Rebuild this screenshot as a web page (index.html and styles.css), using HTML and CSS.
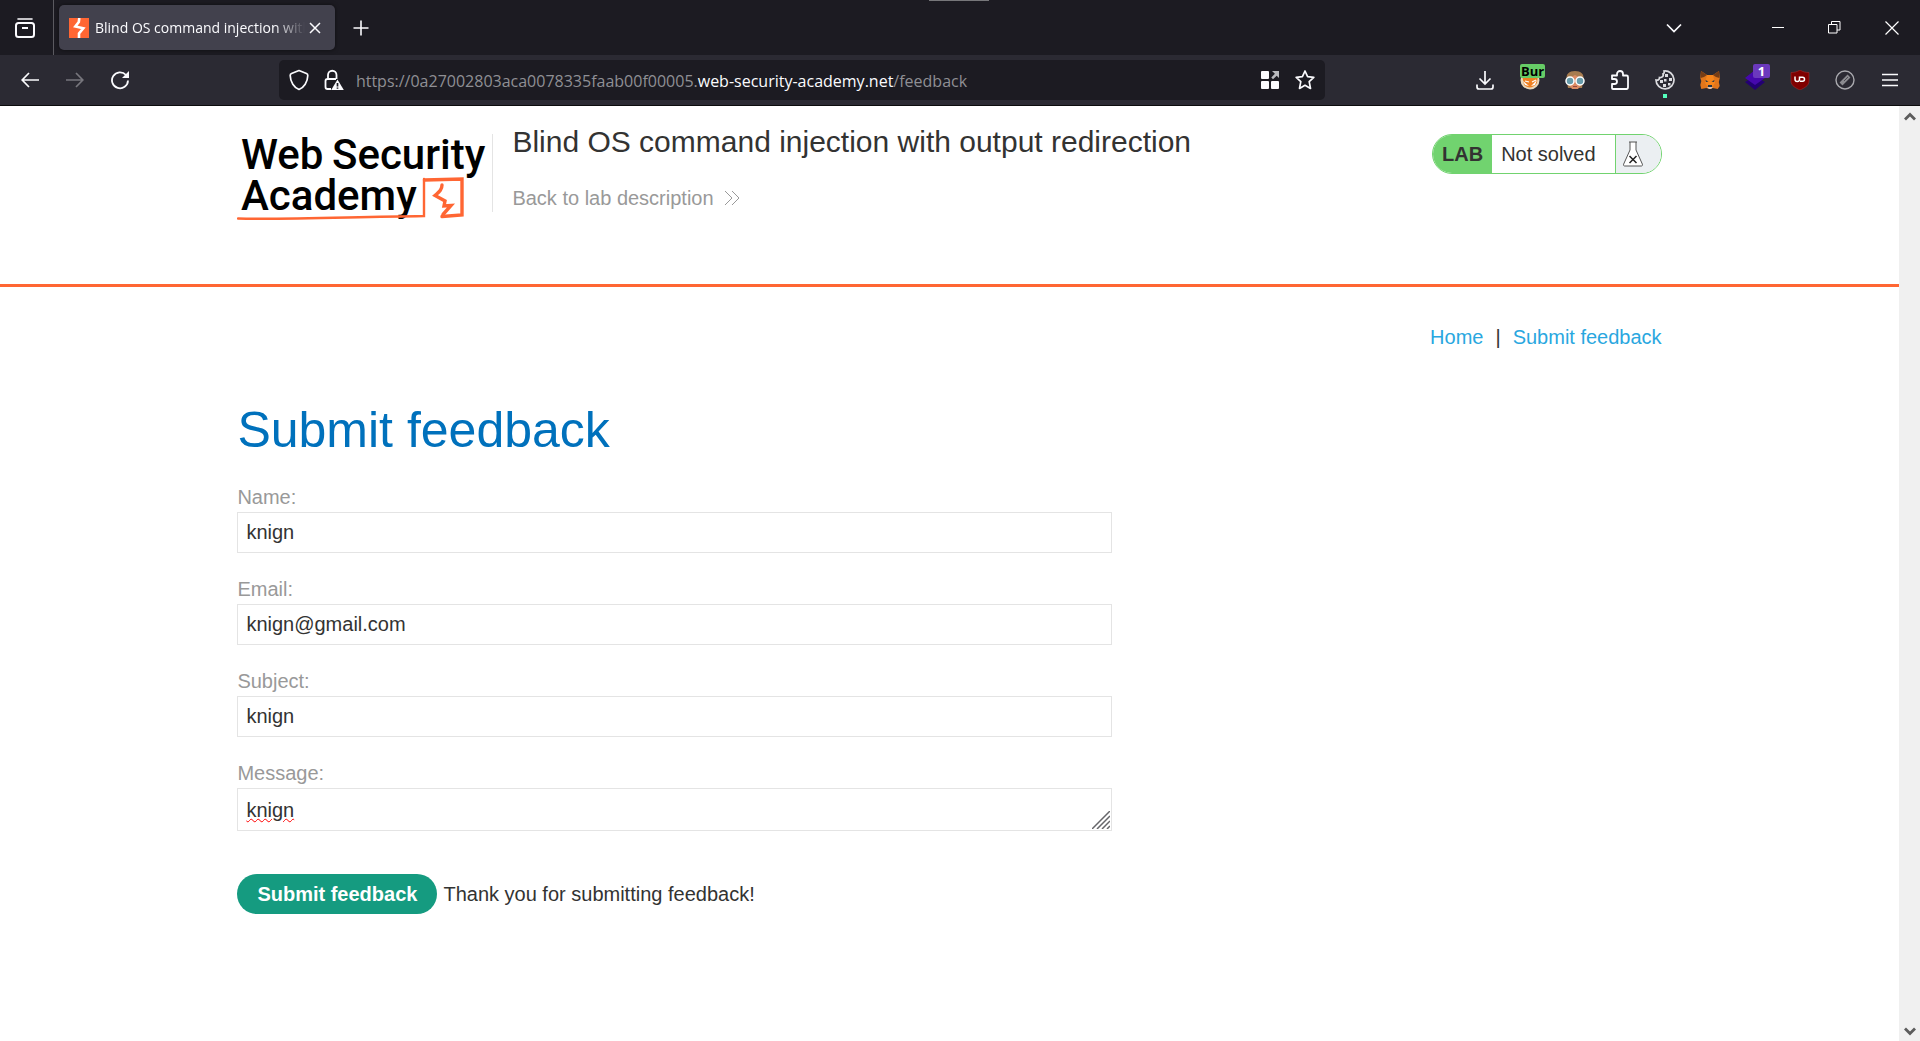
FILE: index.html
```html
<!DOCTYPE html>
<html lang="en">
<head>
<meta charset="utf-8">
<title>Blind OS command injection with output redirection</title>
<link rel="stylesheet" href="styles.css">
</head>
<body>
<div class="browser">
  <div class="tabbar">
    <button class="icon-btn view-btn" aria-label="Firefox View"><svg width="20" height="20" viewBox="0 0 20 20" fill="none" stroke="#fbfbfe" stroke-width="2"><path d="M3 1h14" stroke-width="1.6" stroke-linecap="round"/><rect x="1" y="5" width="18" height="14" rx="2.5"/><path d="M7 10h6"/></svg></button>
    <div class="tab">
      <svg class="favicon" width="20" height="20" viewBox="0 0 20 20"><path fill="#ff6633" d="M0 0h20v20H0z"/><path fill="none" stroke="#fff" stroke-width="2.600" d="M10.300 0L9.800 4 6.300 8.500l8 1.800L10 15.500V20"/></svg>
      <span class="tab-title">Blind OS command injection with output redirection</span>
      <button class="tab-close" aria-label="Close tab"><svg width="12" height="12" viewBox="0 0 12 12" stroke="#fbfbfe" stroke-width="1.500"><path d="M1 1l10 10M11 1L1 11"/></svg></button>
    </div>
    <button class="icon-btn new-tab" aria-label="New tab"><svg width="16" height="16" viewBox="0 0 16 16" stroke="#fbfbfe" stroke-width="1.600"><path d="M8 .5v15M.5 8h15"/></svg></button>
    <span class="notch"></span>
    <div class="window-controls">
      <button class="list-tabs" aria-label="List all tabs"><svg width="16" height="10" viewBox="0 0 16 10" fill="none" stroke="#fbfbfe" stroke-width="1.700"><path d="M1 1.500l7 7 7-7"/></svg></button>
      <button aria-label="Minimize"><svg width="12" height="12" viewBox="0 0 12 12"><path fill="#fff" d="M0 5h12v1H0z"/></svg></button>
      <button aria-label="Restore"><svg width="13" height="13" viewBox="0 0 13 13" fill="none" stroke="#fff"><path d="M.5 3.500h8.500v8.500H.5zM3.500 3.500v-3h8.500v8.500H9"/></svg></button>
      <button aria-label="Close"><svg width="14" height="14" viewBox="0 0 14 14" stroke="#fff" stroke-width="1.200"><path d="M.5 .5l13 13M13.500 .5l-13 13"/></svg></button>
    </div>
  </div>
  <div class="toolbar">
    <button class="icon-btn" aria-label="Back"><svg width="18" height="16" viewBox="0 0 18 16" fill="none" stroke="#fbfbfe" stroke-width="1.700"><path d="M18 8H1.500M8 1L1.200 8 8 15"/></svg></button>
    <button class="icon-btn" aria-label="Forward" disabled><svg width="18" height="16" viewBox="0 0 18 16" fill="none" stroke="#77767d" stroke-width="1.700"><path d="M0 8h16.500M10 1l6.800 7-6.800 7"/></svg></button>
    <button class="icon-btn" aria-label="Reload"><svg width="20" height="20" viewBox="0 0 20 20" fill="none" stroke="#fbfbfe" stroke-width="1.800"><path d="M16 5a8 8 0 1 0 2 5.500"/><path fill="#fbfbfe" stroke="none" d="M19 1v7h-7z"/></svg></button>
    <span class="spring"></span>
    <div class="urlbar">
      <button class="url-icon" aria-label="Tracking protection"><svg width="20" height="22" viewBox="0 0 20 22" fill="none" stroke="#fbfbfe" stroke-width="1.700" stroke-linejoin="round"><path d="M10 1.500l7.500 3c1 .4 1.300 1 1.300 2C18.600 13 15 18.500 10 20.500 5 18.500 1.400 13 1.200 6.500c0-1 .3-1.600 1.300-2z"/></svg></button>
      <button class="url-icon" aria-label="Connection not secure"><svg width="20" height="22" viewBox="0 0 20 22" fill="none"><path stroke="#fbfbfe" stroke-width="1.800" d="M7 20H3.500C2 20 1.500 19.500 1.500 18v-6c0-1.500.5-2 2-2H12M4 10V6a4 4 0 0 1 8.500 0v4"/><path fill="#fbfbfe" d="M13.500 10.500L19.800 21H7.200z"/><path stroke="#1c1b22" stroke-width="1.700" d="M13.500 14v3.500M13.500 18.400v1.400"/></svg></button>
      <span class="url">https://0a27002803aca0078335faab00f00005.<b>web-security-academy.net</b>/feedback</span>
      <button class="url-icon" aria-label="Grid"><svg width="18" height="18" viewBox="0 0 18 18" fill="#fbfbfe"><rect width="8" height="8" rx="1"/><rect y="10" width="8" height="8" rx="1"/><rect x="10" y="10" width="8" height="8" rx="1"/><path fill="#b9b9bd" d="M11 0h7v7l-2.300-2.300-3.700 3.500-1.700-1.700 3.600-3.700z"/></svg></button>
      <button class="url-icon" aria-label="Bookmark this page"><svg width="20" height="20" viewBox="0 0 20 20" fill="none" stroke="#fbfbfe" stroke-width="1.700" stroke-linejoin="round"><path d="M10 1l2.600 5.700 6.200.7-4.600 4.200 1.300 6.800L10 15.300l-5.500 3.100 1.300-6.800L1.200 7.400l6.200-.7z"/></svg></button>
    </div>
    <span class="spring"></span>
    <button class="icon-btn" aria-label="Downloads"><svg width="18" height="20" viewBox="0 0 18 20" fill="none" stroke="#fbfbfe" stroke-width="1.700"><path d="M9 1v13M3.500 8.500L9 14l5.500-5.500M1 14.500V17c0 1.300.7 2 2 2h12c1.300 0 2-.7 2-2v-2.500"/></svg></button>
    <button class="icon-btn" aria-label="FoxyProxy"><svg width="20" height="20" viewBox="0 0 20 20"><circle cx="10" cy="10" r="9.500" fill="#e8d6ba"/><path fill="#ef8122" d="M2 5l7 3 9-3-1 8c-3 5-9 6-13 2z"/><path fill="#fff" d="M3 11l6 5-4-1zM17 10l-6 6 4-1z"/><path stroke="#fff" stroke-width="1.200" d="M5 11l4 1M12 12l4-2"/></svg><span class="badge badge-green">Bur</span></button>
    <button class="icon-btn" aria-label="Extension"><svg width="20" height="20" viewBox="0 0 20 20"><path fill="#a77c50" d="M10 1c6 0 9 3 8.500 8L17 18H3L1.500 9C1 4 4 1 10 1z"/><path fill="#db8b64" d="M4 8l6-3 6 3v7l-3 4H7l-3-4z"/><circle cx="5" cy="11" r="4" fill="#679baa" stroke="#fff" stroke-width="1.500"/><circle cx="15" cy="11" r="4" fill="#679baa" stroke="#fff" stroke-width="1.500"/><path stroke="#9a493d" d="M8 16.500h4"/></svg></button>
    <button class="icon-btn" aria-label="Extensions"><svg width="18" height="20" viewBox="0 0 18 20" fill="none" stroke="#fbfbfe" stroke-width="1.800" stroke-linejoin="round"><path d="M1 8V5.500h5V4a3 3 0 0 1 6 0v1.500h3.500c1 0 1.500.5 1.500 1.500v10c0 1.300-.5 2-1.500 2H2c-.7 0-1-.3-1-1v-4h2.500a2.500 2.500 0 0 0 0-5H1z"/></svg></button>
    <button class="icon-btn cookie" aria-label="Cookie editor"><svg width="20" height="20" viewBox="0 0 20 20" fill="none" stroke="#dcdce0" stroke-width="1.700"><path d="M9 1a9 9 0 1 1-8 9c2 .5 3.500-.5 3.500-2.500C7 8 9 6 8 4c1-.5 1.500-1.500 1-3z"/><path stroke="none" fill="#dcdce0" d="M10 4h3v3h-3zM14 8h3v3h-3zM9 9h2.500v2.500H9zM5 10h3v3H5zM8 14h3v3H8zM13 13h2.500v2.500H13z"/></svg></button>
    <button class="icon-btn" aria-label="MetaMask"><svg width="20" height="20" viewBox="0 0 20 20"><path fill="#e2761b" d="M1 1l6 4h6l6-4 .8 7-1 4 .9 4-2 3-5-1-1.700 1h-2L6.300 18l-5 1-1-4 1-4L.3 8z"/><path fill="#763d16" d="M1 1l6 4-3 2-3.500 1zM19 1l-6 4 3 2 3.500 1z"/><path fill="#f6851b" d="M7 5h6l2 8-2 3H7l-2-3z"/><path fill="#233447" d="M5.500 10l3 1.500-2.500.5zM14.500 10l-3 1.500 2.500.5zM8 15h4v2H8z"/><path fill="#d7c1b3" d="M7 17h6l-2 2H9z"/></svg></button>
    <button class="icon-btn" aria-label="Wappalyzer"><svg width="20" height="20" viewBox="0 0 20 20"><path fill="#230073" d="M0 12l5-3h10l5 3-10 8z"/><path fill="#4608ad" d="M10 0l10 8-10 7L0 8z"/></svg><span class="badge badge-purple">1</span></button>
    <button class="icon-btn" aria-label="uBlock Origin"><svg width="20" height="20" viewBox="0 0 20 20"><path fill="#800000" stroke="#a33" stroke-width=".5" d="M10 0c3 2 6 2.500 9 2.500V11c0 5-5 7-9 9-4-2-9-4-9-9V2.500C4 2.500 7 2 10 0z"/><path fill="none" stroke="#fff" stroke-width="1.500" d="M5 6.500v2.700a2 2 0 0 0 4.500 0V7.200h3a2 2 0 0 1 0 4H10"/></svg></button>
    <button class="icon-btn" aria-label="Blocked"><svg width="20" height="20" viewBox="0 0 20 20"><circle cx="10" cy="10" r="9" fill="none" stroke="#a9a9ae" stroke-width="1.400"/><path stroke="#8b8b90" stroke-width="4" d="M6 14l8-8"/><path stroke="#4c4b53" d="M9 11l4-4"/></svg></button>
    <button class="icon-btn" aria-label="Menu"><svg width="16" height="14" viewBox="0 0 16 14"><path stroke="#fbfbfe" stroke-width="1.700" d="M0 1.500h16M0 7h16M0 12.500h16"/></svg></button>
  </div>
</div>

<div class="viewport">
  <div class="page">
    <header class="lab-header">
      <svg class="logo" role="img" aria-label="Web Security Academy" width="255" height="96" viewBox="0 0 255 96">
        <g class="logo-text"><text x="4" y="41">Web</text><text x="95" y="41">Security</text><text x="4" y="82">Academy</text></g>
        <g fill="none" stroke="#ff6633" stroke-linecap="round"><path stroke-width="2.400" d="M1 90.500c45 1 95-1 186-2.500V51"/><path stroke-width="3.400" d="M187.500 52l37.500-1v36l-20 1.500"/><path stroke-width="3.400" stroke-linejoin="miter" d="M205 57c0 5-3 7-7 10.500l10 5.500-1 5 7-.5-8 9"/></g>
      </svg>
      <div class="title">
        <h2>Blind OS command injection with output redirection</h2>
        <a class="back" href="#lab">Back to lab description <svg width="16" height="16" viewBox="0 0 16 16" fill="none" stroke="#999"><path d="M1 1l7 7-7 7M8 1l7 7-7 7"/></svg></a>
      </div>
      <div class="status"><span class="status-lab">LAB</span><span class="status-text">Not solved</span><span class="status-icon"><svg width="20" height="26" viewBox="0 0 20 26" fill="#fff" stroke="#555"><path d="M6 1h8M7 1v8L.7 23c-.5 1.300 0 2 1 2h16.600c1 0 1.500-.7 1-2L13 9V1"/><path stroke="#222" stroke-width="1.500" d="M6.500 15l7 7M13.500 15l-7 7"/></svg></span></div>
    </header>
    <main class="content">
      <nav class="links"><a href="#home">Home</a><span>|</span><a href="#feedback">Submit feedback</a></nav>
      <h1>Submit feedback</h1>
      <form>
        <label for="name">Name:</label>
        <input id="name" type="text" value="knign">
        <label for="email">Email:</label>
        <input id="email" type="email" value="knign@gmail.com">
        <label for="subject">Subject:</label>
        <input id="subject" type="text" value="knign">
        <label for="message">Message:</label>
        <div class="message-box">
          <textarea id="message" rows="1" spellcheck="false">knign</textarea>
          <svg class="resizer" width="18" height="18" viewBox="0 0 18 18" stroke="#66666a" stroke-width="1.500"><path d="M0 18L18 0M5 18L18 5M10 18l8-8M15 18l3-3"/></svg>
        </div>
        <div class="submit-row"><button class="submit" type="button">Submit feedback</button><span>Thank you for submitting feedback!</span></div>
      </form>
    </main>
  </div>
  <div class="scrollbar"><svg width="12" height="9" viewBox="0 0 12 9" fill="none" stroke="#5c5c5c" stroke-width="2.800"><path d="M1 7.500l5-5 5 5"/></svg><svg width="12" height="9" viewBox="0 0 12 9" fill="none" stroke="#5c5c5c" stroke-width="2.800"><path d="M1 1.500l5 5 5-5"/></svg></div>
</div>
</body>
</html>
```
FILE: styles.css
```css
* { box-sizing: border-box; }

body {
  margin: 0;
  min-height: 100vh;
  display: flex;
  flex-direction: column;
  background: #fff;
  color: #333332;
  font: 20px/24px "Liberation Sans", Arial, sans-serif;
}

svg { display: block; flex: none; }
a { text-decoration: none; }

/* Browser chrome */
.browser {
  color: #fbfbfe;
  background: #2b2a33;
  border-bottom: 1px solid #0c0c0d;
  font-family: "Open Sans", "Noto Sans", sans-serif;
}

.browser button {
  display: flex;
  align-items: center;
  justify-content: center;
  padding: 0;
  border: 0;
  background: none;
  color: inherit;
  font: inherit;
}

.tabbar {
  position: relative;
  display: flex;
  align-items: center;
  height: 55px;
  background: #1c1b22;
}

.icon-btn { position: relative; flex: none; width: 45px; height: 40px; }

.browser .view-btn {
  width: 54px;
  height: 55px;
  padding-right: 3px;
  border-right: 1px solid #5b5a60;
}

.tab {
  display: flex;
  align-items: center;
  width: 276px;
  height: 45px;
  margin-left: 5px;
  padding: 0 10px;
  border-radius: 5px;
  background: #42414d;
  box-shadow: 0 0 4px #0008;
}

.tab-title {
  flex: 1;
  margin-left: 6px;
  overflow: hidden;
  white-space: nowrap;
  font-size: 14px;
  mask-image: linear-gradient(to left, transparent, #000 30px);
}

.tab-close { width: 20px; height: 20px; }
.new-tab { margin-left: 3px; }

.notch {
  position: absolute;
  top: 0;
  left: calc(50% - 31px);
  width: 60px;
  height: 1px;
  background: #77777a;
}

.window-controls { display: flex; margin-left: auto; }
.window-controls button { width: 57px; height: 55px; }
.window-controls .list-tabs { width: 45px; margin-right: 53px; }

.toolbar { display: flex; align-items: center; height: 50px; padding: 0 8px 0 7px; }
.spring { flex: 10; }

.urlbar {
  display: flex;
  flex: 76;
  align-items: center;
  min-width: 0;
  height: 40px;
  padding: 0 3px;
  border-radius: 5px;
  background: #1c1b22;
}

.url-icon { flex: none; width: 35px; height: 35px; }

.url {
  flex: 1;
  min-width: 0;
  margin-left: 4px;
  padding-top: 2px;
  overflow: hidden;
  white-space: nowrap;
  color: #8f8f94;
  font-size: 16px;
}

.url b { color: #fbfbfe; font-weight: 400; }

.badge {
  position: absolute;
  top: 4px;
  right: 5px;
  height: 14px;
  border-radius: 2px;
  font: 700 13px/14px "Open Sans", sans-serif;
}

.badge-green { right: 7px; width: 25px; background: #66cc66; color: #000; }
.badge-purple { right: 7px; width: 17px; background: #6b39bd; color: #fff; }

.cookie::after {
  content: "";
  position: absolute;
  bottom: 2px;
  width: 4px;
  height: 4px;
  background: #54ffbd;
}

/* Page */
.viewport { flex: 1; display: flex; }
.page { flex: 1; min-width: 0; }

.scrollbar {
  display: flex;
  flex-direction: column;
  align-items: center;
  justify-content: space-between;
  width: 21px;
  padding: 6px 0 5px;
  background: #f0f0f0;
}

.lab-header {
  display: flex;
  align-items: flex-start;
  padding: 18px 12.5% 60px;
  border-bottom: 3px solid #ff6633;
}

.logo { margin-top: 4px; }

.logo-text { font: 500 42px Roboto, sans-serif; fill: #000; }

.title {
  position: relative;
  flex: 1;
  padding-left: 20px;
}

.title::before {
  content: "";
  position: absolute;
  top: 10px;
  left: 0;
  width: 1px;
  height: 78px;
  background: #e4e4e4;
}

.title h2 { margin: 0; font-size: 30px; line-height: 36px; font-weight: 400; }

.back {
  display: inline-flex;
  align-items: center;
  gap: 10px;
  margin-top: 26px;
  color: #999;
}

.status {
  display: flex;
  height: 40px;
  margin-top: 10px;
  overflow: hidden;
  border: 1px solid #71d36f;
  border-radius: 20px;
  line-height: 38px;
}

.status-lab { padding: 0 9px; background: #71d36f; font-weight: 700; }
.status-text { padding: 0 19px 0 9px; }

.status-icon {
  display: flex;
  align-items: center;
  width: 46px;
  padding-left: 7px;
  border-left: 1px solid #71d36f;
  background: #ebeff2;
}

.content { padding: 38px 12.5%; }
.links { display: flex; justify-content: flex-end; gap: 12px; }
.links a { color: #29a7e0; }

h1 {
  margin: 51px 0 25px;
  color: #0071bc;
  font-size: 50px;
  line-height: 60px;
  font-weight: 400;
}

form { max-width: 875px; }
label { display: block; margin-bottom: 3px; color: #999; }

input, textarea {
  display: block;
  width: 100%;
  height: 41px;
  margin: 0 0 24px;
  padding: 0 8px;
  border: 1px solid #e4e4e4;
  border-radius: 0;
  background: #fff;
  color: inherit;
  font: inherit;
}

.message-box { position: relative; margin-bottom: 43px; }

textarea {
  height: 43px;
  margin: 0;
  padding: 9px 8px;
  overflow: hidden;
  resize: none;
  text-decoration: underline wavy #f00 1px;
}

.resizer { position: absolute; right: 2px; bottom: 2px; }

.submit-row { display: flex; align-items: center; gap: 6px; }

.submit {
  height: 40px;
  padding: 0 20px;
  border: 0;
  border-radius: 20px;
  background: #159b80;
  color: #fff;
  font: inherit;
  font-weight: 700;
}
```
